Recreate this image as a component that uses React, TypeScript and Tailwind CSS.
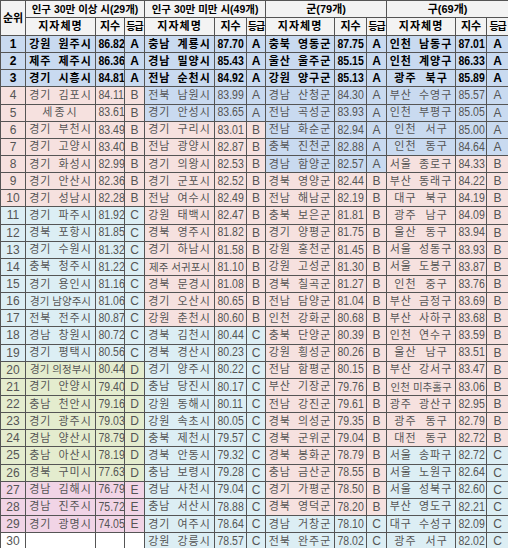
import React from "react";

type Row = [string, string, string];

const g1: Row[] = [
  ["강원 원주시", "86.82", "A"],
  ["제주 제주시", "86.36", "A"],
  ["경기 시흥시", "84.81", "A"],
  ["경기 김포시", "84.11", "B"],
  ["세종시", "83.61", "B"],
  ["경기 부천시", "83.49", "B"],
  ["경기 고양시", "83.40", "B"],
  ["경기 화성시", "82.99", "B"],
  ["경기 안산시", "82.36", "B"],
  ["경기 성남시", "82.28", "B"],
  ["경기 파주시", "81.92", "C"],
  ["경북 포항시", "81.85", "C"],
  ["경기 수원시", "81.32", "C"],
  ["충북 청주시", "81.22", "C"],
  ["경기 용인시", "81.16", "C"],
  ["경기 남양주시", "81.06", "C"],
  ["전북 전주시", "80.87", "C"],
  ["경남 창원시", "80.72", "C"],
  ["경기 평택시", "80.56", "C"],
  ["경기 의정부시", "80.44", "D"],
  ["경기 안양시", "79.40", "D"],
  ["충남 천안시", "79.16", "D"],
  ["경기 광주시", "79.03", "D"],
  ["경남 양산시", "78.79", "D"],
  ["충남 아산시", "78.19", "D"],
  ["경북 구미시", "77.63", "D"],
  ["경남 김해시", "76.79", "E"],
  ["경남 진주시", "75.72", "E"],
  ["경기 광명시", "74.05", "E"],
  ["", "", ""],
];

const g2: Row[] = [
  ["충남 계룡시", "87.70", "A"],
  ["경남 밀양시", "85.43", "A"],
  ["전남 순천시", "84.92", "A"],
  ["전북 남원시", "83.99", "A"],
  ["경기 안성시", "83.65", "A"],
  ["경기 구리시", "83.01", "B"],
  ["전남 광양시", "82.87", "B"],
  ["경기 의왕시", "82.53", "B"],
  ["경기 군포시", "82.52", "B"],
  ["전남 여수시", "82.49", "B"],
  ["강원 태백시", "82.47", "B"],
  ["경북 영주시", "81.82", "B"],
  ["경기 하남시", "81.58", "B"],
  ["제주 서귀포시", "81.10", "B"],
  ["경북 문경시", "81.08", "B"],
  ["경기 오산시", "80.65", "B"],
  ["강원 춘천시", "80.60", "B"],
  ["경북 김천시", "80.44", "C"],
  ["경북 경산시", "80.23", "C"],
  ["경기 양주시", "80.22", "C"],
  ["충남 당진시", "80.17", "C"],
  ["강원 동해시", "80.11", "C"],
  ["강원 속초시", "80.05", "C"],
  ["충북 제천시", "79.57", "C"],
  ["경북 안동시", "79.32", "C"],
  ["충남 보령시", "79.28", "C"],
  ["경남 사천시", "79.04", "C"],
  ["충남 서산시", "78.88", "C"],
  ["경기 여주시", "78.64", "C"],
  ["강원 강릉시", "78.57", "C"],
];

const g3: Row[] = [
  ["충북 영동군", "87.75", "A"],
  ["울산 울주군", "85.15", "A"],
  ["강원 양구군", "85.13", "A"],
  ["경남 산청군", "84.30", "A"],
  ["전남 곡성군", "83.93", "A"],
  ["전남 화순군", "82.94", "A"],
  ["충북 진천군", "82.88", "A"],
  ["경남 함양군", "82.57", "A"],
  ["경북 영양군", "82.44", "B"],
  ["전남 해남군", "82.19", "B"],
  ["충북 보은군", "81.81", "B"],
  ["경기 양평군", "81.75", "B"],
  ["강원 홍천군", "81.45", "B"],
  ["강원 고성군", "81.30", "B"],
  ["경북 칠곡군", "81.27", "B"],
  ["전남 담양군", "81.04", "B"],
  ["인천 강화군", "80.68", "B"],
  ["충북 단양군", "80.39", "B"],
  ["강원 횡성군", "80.26", "B"],
  ["전남 함평군", "80.15", "B"],
  ["부산 기장군", "79.76", "B"],
  ["전남 강진군", "79.61", "B"],
  ["경북 의성군", "79.35", "B"],
  ["경북 군위군", "79.04", "B"],
  ["경북 봉화군", "78.79", "B"],
  ["충남 금산군", "78.55", "B"],
  ["경기 가평군", "78.50", "B"],
  ["경북 영덕군", "78.20", "B"],
  ["경남 거창군", "78.10", "C"],
  ["전북 완주군", "78.02", "C"],
];

const g4: Row[] = [
  ["인천 남동구", "87.01", "A"],
  ["인천 계양구", "86.33", "A"],
  ["광주 북구", "85.89", "A"],
  ["부산 수영구", "85.57", "A"],
  ["인천 부평구", "85.05", "A"],
  ["인천 서구", "85.00", "A"],
  ["인천 동구", "84.64", "A"],
  ["서울 종로구", "84.33", "B"],
  ["부산 동래구", "84.22", "B"],
  ["대구 북구", "84.19", "B"],
  ["광주 남구", "84.09", "B"],
  ["울산 동구", "83.94", "B"],
  ["서울 성동구", "83.93", "B"],
  ["서울 도봉구", "83.87", "B"],
  ["인천 중구", "83.76", "B"],
  ["부산 금정구", "83.69", "B"],
  ["부산 사하구", "83.68", "B"],
  ["인천 연수구", "83.59", "B"],
  ["울산 남구", "83.51", "B"],
  ["부산 강서구", "83.47", "B"],
  ["인천 미추홀구", "83.06", "B"],
  ["광주 광산구", "82.95", "B"],
  ["광주 동구", "82.79", "B"],
  ["대전 동구", "82.72", "B"],
  ["서울 송파구", "82.72", "C"],
  ["서울 노원구", "82.64", "C"],
  ["서울 성북구", "82.60", "C"],
  ["부산 영도구", "82.21", "C"],
  ["대구 수성구", "82.09", "C"],
  ["광주 서구", "82.02", "C"],
];

const BG: Record<string, string> = {
  A: "bg-[#c9daf0]",
  B: "bg-[#f6e1df]",
  C: "bg-[#dceef4]",
  D: "bg-[#e4ecce]",
  E: "bg-[#f1d4e6]",
  "": "bg-white",
};

const cell = "border border-[#555] p-0 align-middle text-center overflow-hidden leading-none";

function Name({ n }: { n: string }) {
  if (!n) return null;
  const parts = n.split(" ");
  const len = n.replace(" ", "").length;
  let cls = "";
  if (parts.length === 1) cls = "text-[11px] tracking-[2px]";
  else if (len >= 6) cls = "text-[10.5px] gap-[3px] tracking-[0px]";
  else if (len === 5) cls = "text-[11px] gap-[7px] tracking-[1px]";
  else cls = "text-[11px] gap-[9px] tracking-[1px]";
  return (
    <div className={`flex justify-center items-center leading-none whitespace-nowrap ${cls}`}>
      {parts.map((p, i) => (
        <span key={i}>{p}</span>
      ))}
    </div>
  );
}

function Num({ v }: { v: string }) {
  if (!v) return null;
  return <span className="inline-block scale-x-[0.84] text-[12.5px] leading-none whitespace-nowrap">{v}</span>;
}

function Group({ r, bold }: { r: Row; bold: boolean }) {
  const bg = BG[r[2]];
  const tc = bold ? "font-bold text-black" : "text-[#555]";
  return (
    <>
      <td className={`${cell} ${bg} ${tc} text-[11px]`}>
        <Name n={r[0]} />
      </td>
      <td className={`${cell} ${bg} ${tc} text-[11px]`}>
        <Num v={r[1]} />
      </td>
      <td className={`${cell} ${bg} ${tc} text-[12px]`}>{r[2]}</td>
    </>
  );
}

const head =
  "border border-[#555] p-0 align-middle text-center bg-[#f3f3f3] text-black font-bold leading-none whitespace-nowrap overflow-hidden";

function SubHead() {
  return (
    <>
      <th className={`${head} text-[11px] tracking-[1px]`}>지자체명</th>
      <th className={`${head} text-[11px]`}>지수</th>
      <th className={`${head} text-[10px] tracking-[-1px]`}>등급</th>
    </>
  );
}

export default function App() {
  return (
    <div className="w-[508px] h-[548px] overflow-hidden bg-white text-[11px] leading-none font-['Liberation_Sans','Noto_Sans_CJK_KR',sans-serif]">
      <table className="table-fixed border-collapse w-[508px] text-[11px] leading-none">
        <colgroup>
          <col className="w-[25px]" />
          <col className="w-[70px]" />
          <col className="w-[29px]" />
          <col className="w-[20px]" />
          <col className="w-[70px]" />
          <col className="w-[32px]" />
          <col className="w-[19px]" />
          <col className="w-[69px]" />
          <col className="w-[32px]" />
          <col className="w-[20px]" />
          <col className="w-[69px]" />
          <col className="w-[31px]" />
          <col className="w-[22px]" />
        </colgroup>
        <thead>
          <tr className="h-[17px]">
            <th rowSpan={2} className={`${head} text-[11px]`}>
              순위
            </th>
            <th colSpan={3} className={`${head} text-[10.5px]`}>
              인구 30만 이상 시(29개)
            </th>
            <th colSpan={3} className={`${head} text-[10.5px]`}>
              인구 30만 미만 시(49개)
            </th>
            <th colSpan={3} className={`${head} text-[11px]`}>
              군(79개)
            </th>
            <th colSpan={3} className={`${head} text-[11px]`}>
              구(69개)
            </th>
          </tr>
          <tr className="h-[18px]">
            <SubHead />
            <SubHead />
            <SubHead />
            <SubHead />
          </tr>
        </thead>
        <tbody>
          {g2.map((_, i) => {
            const bold = i < 3;
            return (
              <tr key={i} className="h-[17.15px]">
                <td
                  className={`${cell} ${BG[g1[i][2]]} ${bold ? "font-bold text-black" : "text-[#555]"} text-[12px]`}
                >
                  {i + 1}
                </td>
                <Group r={g1[i]} bold={bold} />
                <Group r={g2[i]} bold={bold} />
                <Group r={g3[i]} bold={bold} />
                <Group r={g4[i]} bold={bold} />
              </tr>
            );
          })}
        </tbody>
      </table>
    </div>
  );
}
